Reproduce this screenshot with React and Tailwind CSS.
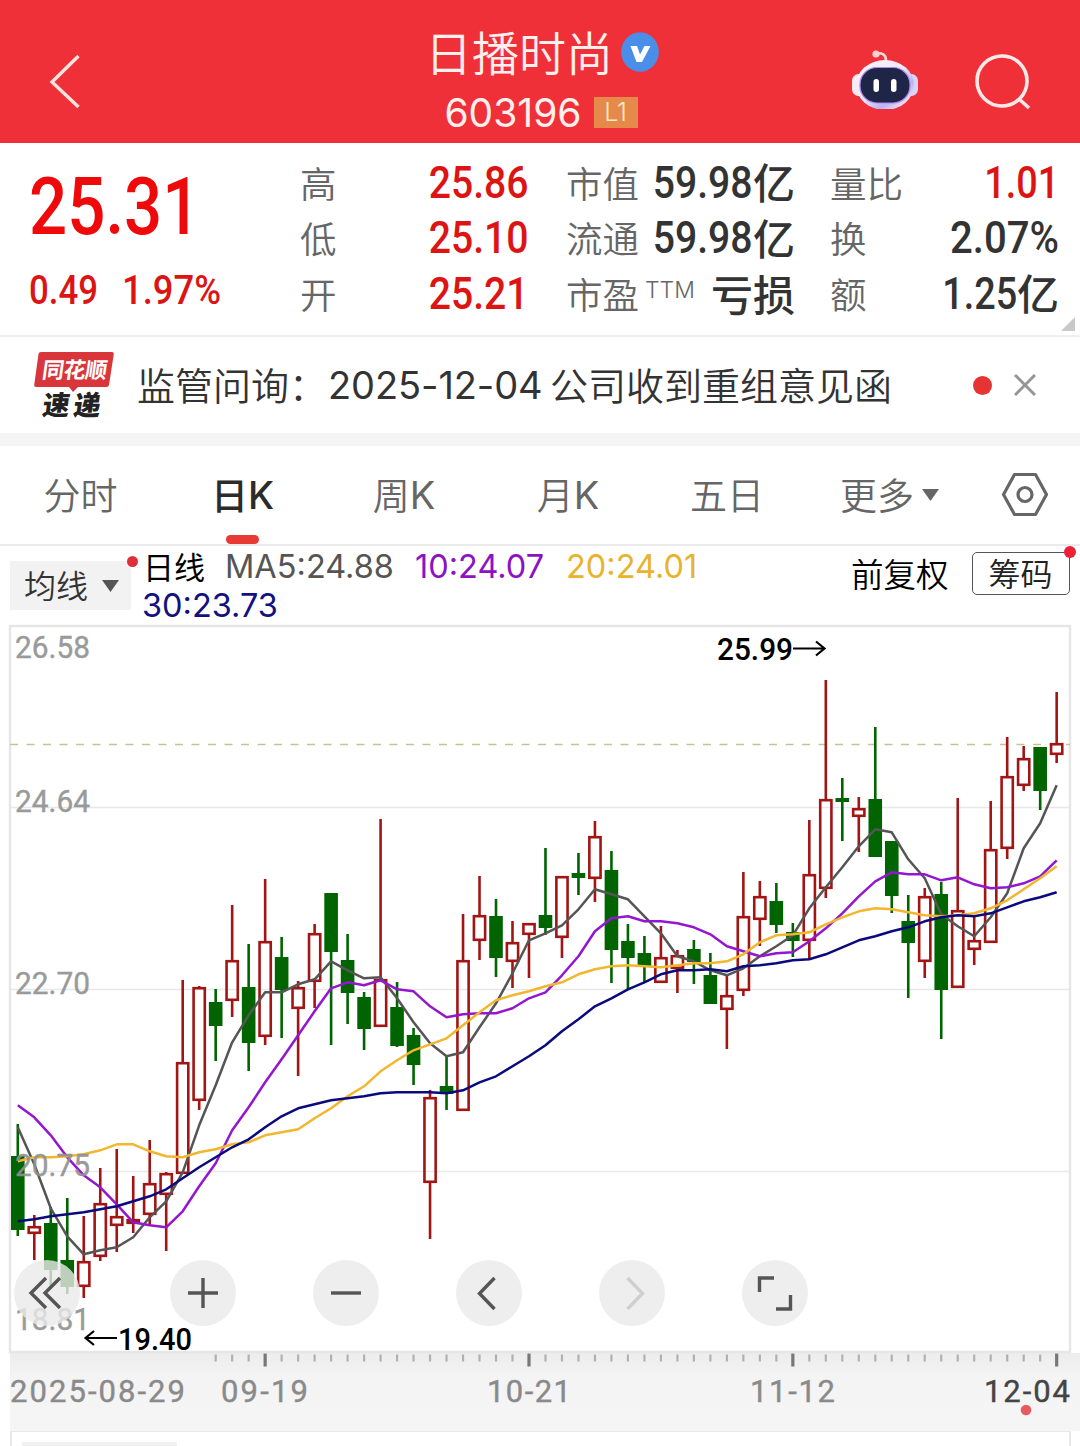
// [direction, high, body top, body bottom, low]
const candles = [
    ["d", 1124, 1156, 1230, 1236], ["u", 1215, 1226, 1234, 1260], ["d", 1207, 1223, 1270, 1288],
    ["d", 1198, 1260, 1287, 1294], ["u", 1216, 1261, 1287, 1298], ["u", 1168, 1203, 1257, 1261],
    ["u", 1149, 1216, 1226, 1252], ["u", 1176, 1219, 1224, 1233], ["u", 1140, 1183, 1215, 1226],
    ["u", 1172, 1173, 1195, 1251], ["u", 980, 1062, 1174, 1174], ["u", 986, 987, 1101, 1110],
    ["d", 989, 1002, 1026, 1061], ["u", 905, 960, 1001, 1017], ["d", 944, 987, 1043, 1071],
    ["u", 879, 941, 1037, 1045], ["d", 937, 957, 990, 1038], ["u", 981, 987, 1009, 1076],
    ["u", 924, 933, 982, 1008], ["d", 893, 893, 952, 1045], ["d", 934, 960, 993, 1024],
    ["d", 992, 997, 1029, 1050], ["u", 819, 979, 1027, 1027], ["d", 982, 1007, 1046, 1047],
    ["d", 1028, 1035, 1065, 1085], ["u", 1090, 1097, 1183, 1239], ["d", 1057, 1086, 1094, 1110],
    ["u", 914, 960, 1111, 1111], ["u", 876, 915, 941, 960], ["d", 899, 916, 958, 977],
    ["u", 921, 942, 962, 988], ["u", 923, 923, 935, 978], ["d", 848, 915, 928, 935],
    ["u", 876, 876, 938, 958], ["d", 853, 873, 878, 895], ["u", 821, 836, 879, 902],
    ["d", 851, 870, 950, 983], ["d", 924, 941, 958, 989], ["d", 936, 953, 966, 983],
    ["u", 926, 957, 983, 983], ["u", 950, 955, 969, 993], ["d", 940, 949, 962, 984],
    ["d", 953, 975, 1004, 1004], ["u", 976, 995, 1010, 1049], ["u", 872, 916, 991, 996],
    ["u", 881, 896, 920, 946], ["d", 883, 901, 925, 933], ["d", 923, 932, 941, 957],
    ["u", 820, 874, 941, 959], ["u", 680, 799, 889, 898], ["d", 778, 798, 802, 841],
    ["u", 797, 808, 817, 852], ["d", 727, 799, 857, 857], ["d", 841, 841, 896, 913],
    ["d", 895, 921, 943, 998], ["u", 888, 896, 962, 978], ["d", 882, 894, 990, 1039],
    ["u", 798, 910, 988, 988], ["u", 915, 940, 950, 965], ["u", 801, 849, 943, 943],
    ["u", 737, 776, 849, 859], ["u", 746, 758, 786, 791], ["d", 747, 747, 791, 810],
    ["u", 692, 743, 755, 763],
];

const averages = [
    {
        color: "#555555",
        values: [
            1127, 1164, 1208, 1236, 1254, 1250, 1247, 1237, 1217, 1201, 1172, 1125, 1085, 1042, 1015, 992,
            992, 984, 979, 961, 970, 978, 977, 998, 1022, 1043, 1056, 1052, 1027, 1003, 973, 940,
            933, 925, 909, 889, 894, 899, 916, 933, 956, 961, 970, 975, 968, 956, 946, 935,
            908, 887, 867, 846, 829, 832, 859, 878, 914, 926, 936, 917, 893, 848, 823, 785,
        ],
    },
    {
        color: "#9416cf",
        values: [
            1105, 1117, 1135, 1157, 1175, 1187, 1204, 1222, 1225, 1227, 1211, 1186, 1163, 1130, 1107, 1082,
            1059, 1035, 1011, 988, 982, 985, 980, 989, 991, 1006, 1017, 1014, 1013, 1013, 1008, 998,
            992, 975, 956, 931, 918, 916, 921, 921, 923, 927, 934, 946, 951, 956, 953, 952,
            941, 928, 913, 896, 881, 872, 874, 874, 880, 877, 884, 888, 887, 883, 876, 860,
        ],
    },
    {
        color: "#f2b62f",
        values: [
            1161, 1157, 1157, 1156, 1154, 1150, 1144, 1144, 1151, 1156, 1157, 1152, 1149, 1144, 1142, 1135,
            1132, 1129, 1118, 1108, 1096, 1086, 1071, 1060, 1050, 1044, 1038, 1025, 1012, 1000, 995, 991,
            986, 982, 974, 969, 966, 965, 966, 967, 965, 963, 963, 961, 954, 942, 935, 934,
            932, 924, 917, 911, 908, 909, 912, 915, 916, 915, 913, 908, 900, 889, 878, 866,
        ],
    },
    {
        color: "#0a0a7d",
        values: [
            1221, 1219, 1216, 1214, 1212, 1209, 1206, 1201, 1196, 1189, 1178, 1167, 1157, 1147, 1139, 1127,
            1116, 1108, 1104, 1100, 1098, 1096, 1093, 1092, 1092, 1092, 1093, 1090, 1082, 1076, 1066, 1056,
            1045, 1031, 1019, 1006, 998, 989, 982, 974, 970, 970, 969, 971, 966, 965, 963, 960,
            959, 954, 947, 940, 936, 931, 927, 921, 917, 915, 916, 913, 907, 901, 897, 892,
        ],
    },
];

const priceLabels = [
    ["26.58", 658],
    ["24.64", 812],
    ["22.70", 994],
    ["20.75", 1176],
    ["18.81", 1330],
];

const dateLabels = [
    ["2025-08-29", 10, 175, "#8a8a8a"],
    ["09-19", 221, 87, "#8a8a8a"],
    ["10-21", 487, 84, "#8a8a8a"],
    ["11-12", 750, 85, "#8a8a8a"],
    ["12-04", 984, 86, "#444444"],
];

const STEP = 16.49;
const FIRST_X = 17.8;
const RED = "#a31515";
const GREEN = "#006400";

const xAt = (i) => FIRST_X + i * STEP;

function Candle({ index, data }) {
    const [dir, high, top, bottom, low] = data;
    const x = xAt(index);

    if (dir === "d") {
        return (
            <g fill={GREEN}>
                <rect x={x - 1.3} y={high} width="2.6" height={low - high} />
                <rect x={x - 6.8} y={top} width="13.6" height={bottom - top} />
            </g>
        );
    }

    return (
        <g stroke={RED} strokeWidth="2.6" fill="none">
            <path d={`M${x} ${high}V${top}M${x} ${bottom}V${low}`} />
            <rect x={x - 5.6} y={top + 1.2} width="11.2" height={bottom - top - 2.4} />
        </g>
    );
}

function Robot() {
    return (
        <svg width="68" height="64" viewBox="0 0 68 64" fill="none">
            <defs>
                <linearGradient id="shell" x1="10" y1="10" x2="52" y2="62" gradientUnits="userSpaceOnUse">
                    <stop stopColor="#fff5f8" />
                    <stop offset="0.55" stopColor="#efe6fa" />
                    <stop offset="0.8" stopColor="#b9b2f5" />
                    <stop offset="1" stopColor="#fbe3ee" />
                </linearGradient>
            </defs>
            <path d="M25 8.500c6-1 10 1 10 7" stroke="#ffdcdc" strokeWidth="2.5" />
            <circle cx="25" cy="9" r="3.6" fill="#ffd0d0" />
            <rect x="1" y="29" width="13" height="22" rx="6.5" fill="#fbeaf1" />
            <rect x="54" y="29" width="13" height="22" rx="6.5" fill="#d9d3fa" />
            <ellipse cx="34" cy="40" rx="29" ry="25" fill="url(#shell)" />
            <rect x="9" y="22.500" width="50" height="35.5" rx="17" fill="#1f2547" stroke="#a98be8" strokeWidth="1.2" />
            <rect x="22.500" y="34" width="5.5" height="13" rx="2.7" fill="#fff" />
            <rect x="40" y="34" width="5.5" height="13" rx="2.7" fill="#fff" />
        </svg>
    );
}

function Header() {
    return (
        <header className="flex h-[143px] items-start justify-between bg-[#f03038] text-[#fff0ee]">
            <button type="button" className="mt-[54px] ml-[48px] w-[340px]">
                <svg width="34" height="56" viewBox="0 0 34 56" fill="none" stroke="#ffe3df" strokeWidth="3.4">
                    <path d="M30.500 2L4 28L30.500 53" />
                </svg>
            </button>
            <div className="flex w-[310px] flex-col items-center">
                <div className="mt-[20px] -ml-[2px] flex h-[64px] items-center gap-[8px]">
                    <h1 className="-mt-[3px] font-['Noto_Sans_CJK_SC',sans-serif] text-[47px] leading-none font-[350] whitespace-nowrap">日播时尚</h1>
                    <svg width="38" height="40" viewBox="0 0 38 40">
                        <ellipse cx="19" cy="20" rx="18.800" ry="19.800" fill="#4a8eea" />
                        <path d="M9.500 14h6.500l3 8.500l4.500-8.500h6l-8.500 16h-5.500z" fill="#fff" />
                    </svg>
                </div>
                <div className="-mt-[2px] -ml-[4px] flex h-[60px] items-center gap-[12px]">
                    <span className="font-['Inter',sans-serif] text-[39px] leading-none font-normal">603196</span>
                    <span className="flex h-[31px] w-[44px] items-center justify-center bg-[#e58a4b] font-['Inter',sans-serif] text-[25px] leading-none font-light text-[#ffe9c4]">
                        L1
                    </span>
                </div>
            </div>
            <div className="flex w-[382px] items-start justify-end pr-[46px]">
                <div className="mt-[45px] mr-[55px]"><Robot /></div>
                <svg className="mt-[53px]" width="60" height="60" viewBox="0 0 60 60" fill="none" stroke="#ffe9e6" strokeWidth="3.6">
                    <circle cx="28" cy="28" r="25" />
                    <path d="M45 46L55 55" />
                </svg>
            </div>
        </header>
    );
}

function Num({ children, unit, className = "", scale = "scale-x-[0.88]" }) {
    return (
        <span className="flex h-full items-center justify-end">
            <span className={`-mt-[2px] w-[98px] text-right font-['Roboto',sans-serif] text-[44.5px] leading-none font-medium whitespace-nowrap ${className}`}>
                <span className={`float-right inline-block origin-right ${scale}`}>{children}</span>
            </span>
            {unit && <span className="-mt-[5px] font-['Noto_Sans_CJK_SC',sans-serif] text-[42px] leading-none font-medium">{unit}</span>}
        </span>
    );
}

function StatColumn({ rows, className }) {
    return (
        <dl className={`flex w-[229px] flex-col ${className}`}>
            {rows.map((row) => (
                <div key={row.label} className="flex h-[55.5px] items-center justify-between text-[#333333]">
                    <dt className="-mt-[2px] flex font-['Noto_Sans_CJK_SC',sans-serif] text-[36.5px] leading-none font-[350] whitespace-nowrap text-[#666666]">
                        {row.label}
                        {row.sup && <span className="ml-[6px] font-['Inter',sans-serif] text-[23px] leading-[29px] font-light">{row.sup}</span>}
                    </dt>
                    <dd className="h-full">{row.value}</dd>
                </div>
            ))}
        </dl>
    );
}

function Stats() {
    return (
        <section className="relative flex h-[194px] border-b-2 border-[#efefef] bg-white pt-[13px]">
            <div className="w-[300px] pl-[29px] font-['Roboto',sans-serif] font-medium text-[#dc1414]">
                <div className="mt-[11px] h-[80px] origin-left scale-x-[0.84] text-[80px] leading-[80px] text-[#ee0a0a]">25.31</div>
                <div className="mt-[22px] flex text-[40px] leading-[44px]">
                    <span className="w-[93px] origin-left scale-x-[0.87]">0.49</span>
                    <span className="origin-left scale-x-[0.91]">1.97%</span>
                </div>
            </div>
            <StatColumn
                className=""
                rows={[
                    { label: "高", value: <Num className="text-[#dc1414]">25.86</Num> },
                    { label: "低", value: <Num className="text-[#dc1414]">25.10</Num> },
                    { label: "开", value: <Num className="text-[#dc1414]">25.21</Num> },
                ]}
            />
            <StatColumn
                className="ml-[37px]"
                rows={[
                    { label: "市值", value: <Num unit="亿">59.98</Num> },
                    { label: "流通", value: <Num unit="亿">59.98</Num> },
                    { label: "市盈", sup: "TTM", value: <span className="-mt-[2px] flex h-full items-center font-['Noto_Sans_CJK_SC',sans-serif] text-[42px] leading-none font-medium">亏损</span> },
                ]}
            />
            <StatColumn
                className="ml-[35px]"
                rows={[
                    { label: "量比", value: <Num scale="scale-x-[0.85]" className="text-[#dc1414]">1.01</Num> },
                    { label: "换", value: <Num scale="scale-x-[0.9]">2.07%</Num> },
                    { label: "额", value: <Num unit="亿" scale="scale-x-[0.85]">1.25</Num> },
                ]}
            />
            <svg className="absolute right-[5px] bottom-[4px]" width="14" height="14" viewBox="0 0 14 14">
                <path d="M14 0V14H0z" fill="#c9c9c9" />
            </svg>
        </section>
    );
}

function News() {
    return (
        <section className="flex h-[96px] items-center bg-white font-['Inter','Noto_Sans_CJK_SC',sans-serif] text-[#333333]">
            <div className="relative ml-[34px] flex h-[66px] w-[80px] flex-col items-center font-['Noto_Sans_CJK_SC',sans-serif] leading-none font-black">
                <svg className="absolute top-0 left-0" width="80" height="42" viewBox="0 0 80 42">
                    <path d="M7 0H78q2 0 1.800 2L75 33q-.5 2-2.500 2H44l-5 5l-4-5H2q-2 0-1.800-2L4.500 2Q5 0 7 0z" fill="#d9363b" />
                </svg>
                <span className="relative mt-[4px] h-[34px] skew-x-[-8deg] text-[22px] leading-[24px] font-bold tracking-[-0.5px] whitespace-nowrap text-white">同花顺</span>
                <span className="skew-x-[-8deg] text-[27px] leading-[28px] tracking-[4px] whitespace-nowrap text-[#222222]">速递</span>
            </div>
            <p className="ml-[23px] flex w-[820px] items-center leading-none font-[350] whitespace-nowrap">
                <span className="-mt-[3px] w-[191px] font-['Noto_Sans_CJK_SC',sans-serif] text-[38px]">监管问询：</span>
                <span className="w-[222px] text-[38px] font-normal tracking-[-0.1px]">2025-12-04</span>
                <span className="-mt-[3px] font-['Noto_Sans_CJK_SC',sans-serif] text-[38px]">公司收到重组意见函</span>
            </p>
            <span className="ml-[16px] size-[19px] rounded-full bg-[#e63434]" />
            <svg className="ml-[22px]" width="22" height="22" viewBox="0 0 22 22" stroke="#969696" strokeWidth="3">
                <path d="M1 1L21 21M21 1L1 21" />
            </svg>
        </section>
    );
}

const tabs = [
    { label: "分时", width: "w-[161px]" },
    { label: "日", k: true, width: "w-[163px]", active: true },
    { label: "周", k: true, width: "w-[160px]" },
    { label: "月", k: true, width: "w-[168px]" },
    { label: "五日", width: "w-[150px]" },
];

function Tabs() {
    return (
        <nav className="flex h-[100px] items-center border-b-2 border-[#ebebeb] bg-white font-['Noto_Sans_CJK_SC',sans-serif] text-[37px] leading-none text-[#666666]">
            {tabs.map((tab) => (
                <div
                    key={tab.label}
                    className={`relative flex h-full items-center justify-center whitespace-nowrap ${tab.width} ${tab.active ? "font-medium text-[#2b2b2b]" : "font-[350]"}`}
                >
                    <span className="-mt-[2px]">{tab.label}</span>
                    {tab.k && <span className={`font-['Inter',sans-serif] text-[38px] ${tab.active ? "font-medium" : "font-normal"}`}>K</span>}
                    {tab.active && <span className="absolute bottom-0 h-[9px] w-[33px] rounded-full bg-[#e83a34]" />}
                </div>
            ))}
            <div className="ml-[38px] flex w-[161px] items-center font-[350] whitespace-nowrap">
                <span className="-mt-[2px]">更多</span>
                <svg className="ml-[8px]" width="17" height="12" viewBox="0 0 17 12">
                    <path d="M0 0H17L8.500 12z" fill="#666666" />
                </svg>
            </div>
            <svg width="48" height="46" viewBox="0 0 48 46" fill="none" stroke="#666666" strokeWidth="3.2" strokeLinejoin="round">
                <path d="M13.500 2.500H34.500L45.500 22.500L34.500 42.500H13.500L2.500 22.500z" />
                <circle cx="24" cy="22.500" r="7" />
            </svg>
        </nav>
    );
}

function Legend() {
    return (
        <div className="flex h-[79px] bg-white font-['Noto_Sans_CJK_SC',sans-serif] leading-none font-[350]">
            <div className="relative mt-[15px] ml-[10px] flex h-[49px] w-[121px] items-center bg-[#f2f2f2] pl-[14px] text-[32px] whitespace-nowrap text-[#333333]">
                <span className="-mt-[3px]">均线</span>
                <svg className="ml-[14px]" width="17" height="12" viewBox="0 0 17 12">
                    <path d="M0 0H17L8.500 12z" fill="#555555" />
                </svg>
                <span className="absolute -top-[5px] -right-[7px] size-[11px] rounded-full bg-[#dd3038]" />
            </div>
            <div className="ml-[12px] w-[700px] font-normal">
                <div className="flex h-[43px] items-center font-['Inter',sans-serif] text-[32.5px] whitespace-nowrap">
                    <span className="-mt-[5px] w-[82px] font-['Noto_Sans_CJK_SC',sans-serif] text-[31px] text-black">日线</span>
                    <span className="w-[190px] text-[#555555]">MA5:24.88</span>
                    <span className="w-[151px] text-[#8c12c4]">10:24.07</span>
                    <span className="text-[#e8b32e]">20:24.01</span>
                </div>
                <div className="-mt-[1px] -ml-[1px] flex h-[37px] items-center font-['Inter',sans-serif] text-[32.5px] text-[#11117f]">30:23.73</div>
            </div>
            <div className="mt-[6px] ml-[8px] flex h-[43px] items-center gap-[23px] text-[32.5px] whitespace-nowrap">
                <span className="text-black">前复权</span>
                <span className="relative flex h-[43px] w-[98px] items-center justify-center rounded-[5px] border-[1.5px] border-[#555555] text-[32px] text-[#222222]">
                    <span className="-mt-[4px]">筹码</span>
                    <span className="absolute -top-[7px] -right-[7px] size-[12px] rounded-full bg-[#ec2039]" />
                </span>
            </div>
        </div>
    );
}

function RoundButton({ children, className = "" }) {
    return (
        <button type="button" className={`size-[66px] rounded-full bg-[#eaeaea]/80 ${className}`}>
            <svg width="66" height="66" viewBox="0 0 66 66" fill="none" stroke="#555555" strokeWidth="3.4">
                {children}
            </svg>
        </button>
    );
}

function Chart() {
    return (
        <section className="relative h-[728px] bg-white">
            <svg width="1080" height="728" viewBox="0 625 1080 728" className="block overflow-visible font-['Roboto',sans-serif]">
                <path d="M10 807.500H1070M10 989.500H1070M10 1171.500H1070" stroke="#e8e8e8" strokeWidth="1.5" />
                <rect x="10" y="626" width="1060" height="726" fill="none" stroke="#e6e6e6" strokeWidth="2.4" />
                <path d="M10 744.500H1070" stroke="#cdc08f" strokeWidth="1.6" strokeDasharray="8 8.500" />
                {candles.map((data, i) => (
                    <Candle key={i} index={i} data={data} />
                ))}
                {averages.map((line) => (
                    <polyline
                        key={line.color}
                        points={line.values.map((y, i) => `${xAt(i)},${y + 0.3}`).join(" ")}
                        fill="none"
                        stroke={line.color}
                        strokeWidth="2.5"
                        strokeLinejoin="round"
                    />
                ))}
                <g fontSize="31" fill="#909090" stroke="#909090" strokeWidth="0.4" opacity="0.9">
                    {priceLabels.map(([text, y]) => (
                        <text key={text} x="15" y={y} textLength="75" lengthAdjust="spacingAndGlyphs">
                            {text}
                        </text>
                    ))}
                </g>
                <g fontSize="31" fontWeight="500" fill="#000">
                    <text x="717" y="660" textLength="76" lengthAdjust="spacingAndGlyphs">25.99</text>
                    <text x="118" y="1349.500" textLength="74" lengthAdjust="spacingAndGlyphs">19.40</text>
                </g>
                <g fill="none" stroke="#000" strokeWidth="2.2">
                    <path d="M793 648.500H824M816 641.500L824.500 648.500L816 655.500" />
                    <path d="M117 1338H86M94 1331L85.500 1338L94 1345" />
                </g>
            </svg>
            <div className="absolute top-[635px] left-[14px] flex">
                <RoundButton>
                    <path d="M32 18L17 33L32 48M46 18L31 33L46 48" />
                </RoundButton>
                <RoundButton className="ml-[90px]">
                    <path d="M18 33H48M33 18V48" />
                </RoundButton>
                <RoundButton className="ml-[77px]">
                    <path d="M18 33H48" />
                </RoundButton>
                <RoundButton className="ml-[77px]">
                    <path d="M38.500 18L23.500 33.500L38.500 49" />
                </RoundButton>
                <RoundButton className="ml-[77px]">
                    <path d="M28.500 18L43.500 33.500L28.500 49" stroke="#cfcfcf" />
                </RoundButton>
                <RoundButton className="ml-[77px]">
                    <path d="M17.500 32V18H32M48.500 35V49H34" />
                </RoundButton>
            </div>
        </section>
    );
}

function TimeAxis() {
    return (
        <section className="h-[78px] bg-white pl-[10px]">
            <div className="h-full bg-linear-to-b from-[#ececec] via-[#f4f4f4] via-30% to-[#f5f5f5]">
                <svg width="1070" height="78" viewBox="10 1353 1070 78" className="block font-['Roboto',sans-serif]">
                    {candles.map((_, i) => {
                        if (i < 12) return null;
                        const major = i % 16 === 15;
                        return (
                            <path
                                key={i}
                                d={`M${xAt(i)} ${major ? 1353.5 : 1354.5}V${major ? 1366.5 : 1361.5}`}
                                stroke={major ? "#777777" : "#b0b0b0"}
                                strokeWidth={major ? 3.2 : 2.2}
                            />
                        );
                    })}
                    {dateLabels.map(([text, x, width, color]) => (
                        <text key={text} x={x} y="1401.500" fontSize="31" textLength={width} fill={color} stroke={color} strokeWidth="0.4">
                            {text}
                        </text>
                    ))}
                    <circle cx="1026" cy="1410" r="5.300" fill="#e85a60" />
                </svg>
            </div>
        </section>
    );
}

export default function App() {
    return (
        <main className="h-[1446px] w-[1080px] overflow-hidden bg-white">
            <Header />
            <Stats />
            <News />
            <div className="h-[13px] bg-[#f5f5f5]" />
            <Tabs />
            <Legend />
            <Chart />
            <TimeAxis />
            <div className="ml-[10px] h-[15px] w-[1061px] border-x-2 border-t border-[#e8e8e8] bg-white pt-[10px] pl-[10px]">
                <div className="h-[5px] w-[155px] bg-[#f2f2f2]" />
            </div>
        </main>
    );
}
